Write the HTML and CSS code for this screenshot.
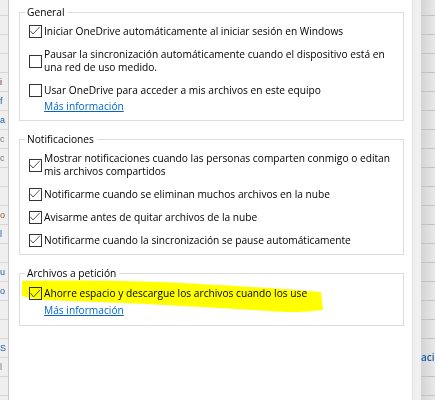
FILE: index.html
```html
<!DOCTYPE html>
<html lang="es">
<head>
    <meta charset="UTF-8">
    <meta name="viewport" content="width=device-width, initial-scale=1.0">
    <title>OneDrive - Configuración</title>
    <link rel="stylesheet" href="styles.css">
</head>
<body>
    <div class="screen">
        <!-- ventana de fondo (izquierda) -->
        <div class="app-left">
            <div class="bg-rows">
                <div class="bg-row"></div>
                <div class="bg-row"></div>
                <div class="bg-row"></div>
                <div class="bg-row"></div>
                <div class="bg-row"><span class="bg-text red">i</span></div>
                <div class="bg-row"><span class="bg-text blue">f</span></div>
                <div class="bg-row"><span class="bg-text blue">a</span></div>
                <div class="bg-row"><span class="bg-text gray">c</span></div>
                <div class="bg-row"><span class="bg-text gray">c</span></div>
                <div class="bg-row"></div>
                <div class="bg-row"></div>
                <div class="bg-row"><span class="bg-text brown">o</span></div>
                <div class="bg-row"><span class="bg-text blue">l</span></div>
                <div class="bg-row"></div>
                <div class="bg-row"><span class="bg-text blue">u</span></div>
                <div class="bg-row"><span class="bg-text blue">o</span></div>
                <div class="bg-row"></div>
                <div class="bg-row"></div>
                <div class="bg-row"><span class="bg-text blue">S</span></div>
                <div class="bg-row"><span class="bg-text gray">l</span></div>
                <div class="bg-row"></div>
            </div>
        </div>

        <div class="dialog">
            <fieldset class="group">
                <legend>General</legend>
                <label class="option">
                    <span class="box"><svg viewBox="0 0 11 11"><polyline points="0.3,4.8 3,8 9.8,0.8"/></svg></span>
                    <span class="option-text">Iniciar OneDrive automáticamente al iniciar sesión en Windows</span>
                </label>
                <label class="option">
                    <span class="box"></span>
                    <span class="option-text">Pausar la sincronización automáticamente cuando el dispositivo está en<br>una red de uso medido.</span>
                </label>
                <label class="option">
                    <span class="box"></span>
                    <span class="option-text">Usar OneDrive para acceder a mis archivos en este equipo</span>
                </label>
                <a class="more-link" href="#">Más información</a>
            </fieldset>

            <fieldset class="group">
                <legend>Notificaciones</legend>
                <label class="option">
                    <span class="box"><svg viewBox="0 0 11 11"><polyline points="0.3,4.8 3,8 9.8,0.8"/></svg></span>
                    <span class="option-text">Mostrar notificaciones cuando las personas comparten conmigo o editan<br>mis archivos compartidos</span>
                </label>
                <label class="option">
                    <span class="box"><svg viewBox="0 0 11 11"><polyline points="0.3,4.8 3,8 9.8,0.8"/></svg></span>
                    <span class="option-text">Notificarme cuando se eliminan muchos archivos en la nube</span>
                </label>
                <label class="option">
                    <span class="box"><svg viewBox="0 0 11 11"><polyline points="0.3,4.8 3,8 9.8,0.8"/></svg></span>
                    <span class="option-text">Avisarme antes de quitar archivos de la nube</span>
                </label>
                <label class="option">
                    <span class="box"><svg viewBox="0 0 11 11"><polyline points="0.3,4.8 3,8 9.8,0.8"/></svg></span>
                    <span class="option-text">Notificarme cuando la sincronización se pause automáticamente</span>
                </label>
            </fieldset>

            <fieldset class="group last">
                <legend>Archivos a petición</legend>
                <label class="option">
                    <span class="box"><svg viewBox="0 0 11 11"><polyline points="0.5,5 3.5,9 10,1.8"/></svg></span>
                    <span class="option-text">Ahorre espacio y descargue los archivos cuando los use</span>
                </label>
                <a class="more-link" href="#">Más información</a>
            </fieldset>
        </div>

        <div class="frame"></div>

        <!-- ventana de fondo (derecha, con sombra) -->
        <div class="app-right">
            <div class="bg-rows">
                <div class="bg-row"></div>
                <div class="bg-row"></div>
                <div class="bg-row"></div>
                <div class="bg-row"></div>
                <div class="bg-row"></div>
                <div class="bg-row"></div>
                <div class="bg-row"></div>
                <div class="bg-row"></div>
                <div class="bg-row"></div>
                <div class="bg-row"></div>
                <div class="bg-row"></div>
                <div class="bg-row"></div>
                <div class="bg-row"></div>
                <div class="bg-row"></div>
                <div class="bg-row"></div>
                <div class="bg-row"></div>
                <div class="bg-row"></div>
                <div class="bg-row"></div>
                <div class="bg-row tall"><span class="bg-label">aci</span></div>
                <div class="bg-row"></div>
            </div>
        </div>
    </div>

    <!-- trazo de marcador amarillo -->
    <svg class="marker" viewBox="0 0 435 400">
        <path d="M22,281 C80,280 140,281 180,283 C240,286 290,289 321,292 L323,310 C305,312 290,313 270,311 C220,308 150,304 100,302 C60,301 40,300 30,298 L22,296 Z"/>
    </svg>
</body>
</html>
```

FILE: styles.css
```css
* {
    margin: 0;
    padding: 0;
    box-sizing: border-box;
}

body {
    width: 435px;
    height: 400px;
    overflow: hidden;
    font-family: 'Open Sans', 'Noto Sans', sans-serif;
    font-size: 10.2px;
    line-height: 13px;
    color: #000;
    background: #fff;
}

.screen {
    display: flex;
    height: 400px;
}

/* ventanas de fondo */
.app-left {
    width: 8px;
    background: #efefef;
    overflow: hidden;
}

.app-right {
    width: 14px;
    background: linear-gradient(to right, #d3d3d3, #e9e9e9);
    overflow: hidden;
}

.bg-rows {
    margin-top: -3px;
}

.bg-row {
    height: 19px;
    border-bottom: 1px solid #d6d6d6;
    display: flex;
    align-items: center;
    white-space: nowrap;
}

.app-right .bg-row {
    border-bottom-color: #c2c2c2;
}

.bg-row.tall {
    height: 38px;
}

.bg-text {
    font-family: 'Liberation Sans', sans-serif;
    font-size: 9px;
}

.bg-text.red { color: #7a1f1f; }
.bg-text.blue { color: #1b5fa8; }
.bg-text.gray { color: #777; }
.bg-text.brown { color: #8a5a2a; }

.bg-label {
    font-size: 10px;
    font-weight: 600;
    color: #1b5fa8;
}

/* diálogo */
.dialog {
    flex: 1;
    background: #fff;
    border-left: 1px solid #c9c9c9;
    padding: 6px 8px 0 10px;
}

.frame {
    width: 9px;
    background: #f0f0f0;
    border-left: 1px solid #e0e0e0;
}

.group {
    border: 1px solid #dcdcdc;
    padding: 6px 9px 7px;
    margin-bottom: 12px;
    display: flex;
    flex-direction: column;
    gap: 10px;
}

.group.last {
    padding-top: 7px;
    padding-bottom: 8px;
}

.group legend {
    padding: 0 3px 0 2px;
    margin-left: -4px;
    line-height: 13px;
}

.option {
    display: flex;
    align-items: center;
}

.box {
    width: 13px;
    height: 13px;
    border: 1px solid #333;
    background: #fff;
    margin-right: 2px;
    flex-shrink: 0;
}

.box svg {
    display: block;
    width: 11px;
    height: 11px;
    fill: none;
    stroke: #555;
    stroke-width: 1;
}

.option-text {
    white-space: nowrap;
}

.more-link {
    margin-top: -7px;
    margin-left: 15px;
    align-self: flex-start;
    color: #0066cc;
    text-decoration: underline;
}

.group.last .more-link {
    margin-top: -6px;
}

/* trazo del marcador */
.marker {
    position: absolute;
    top: 0;
    left: 0;
    width: 435px;
    height: 400px;
    pointer-events: none;
    mix-blend-mode: multiply;
}

.marker path {
    fill: #ffff00;
}
```
